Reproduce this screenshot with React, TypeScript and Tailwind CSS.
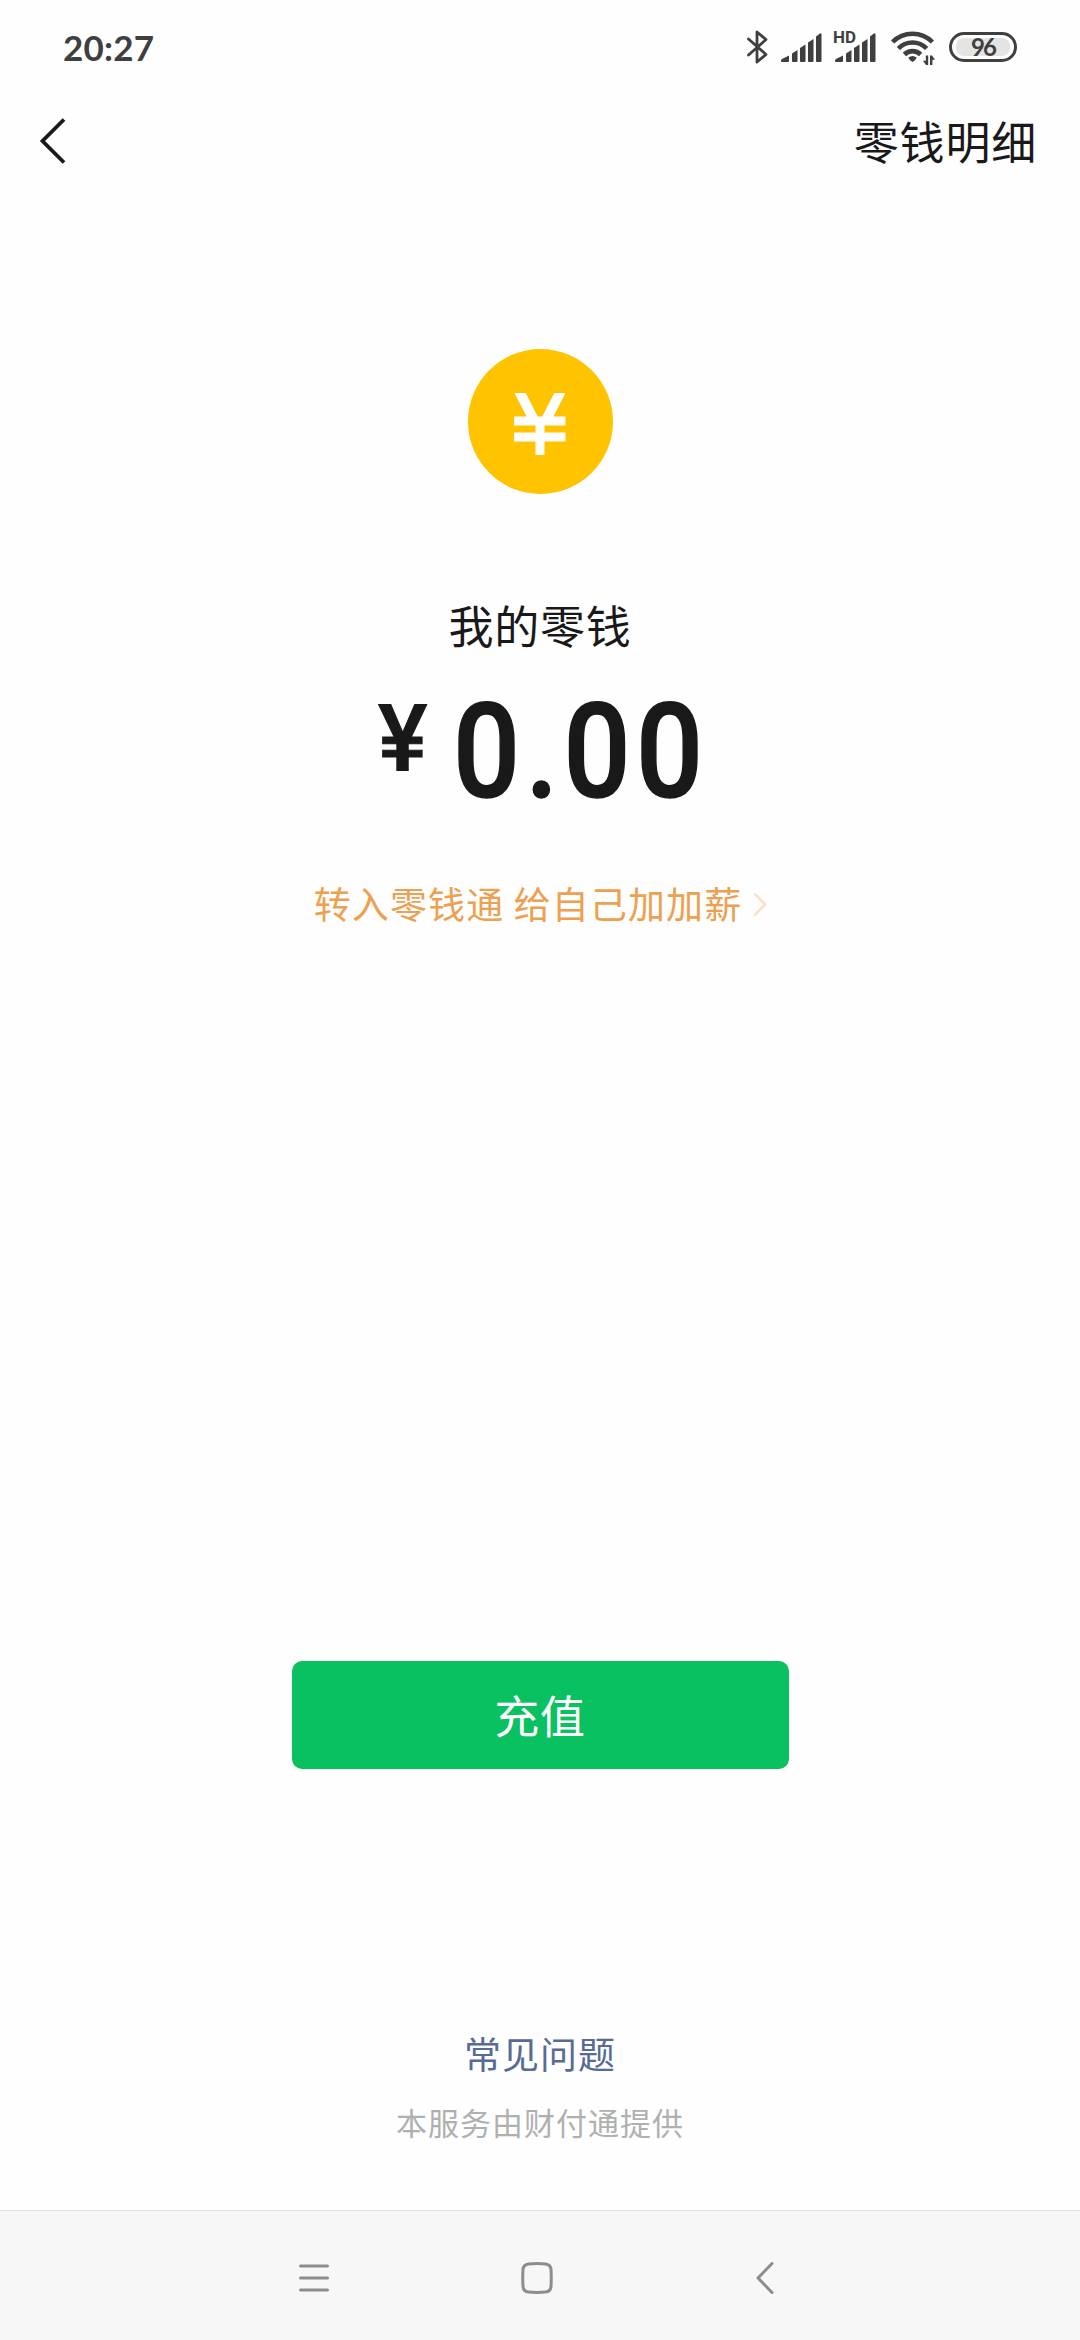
import type { ReactNode } from "react";

const SIGNAL_BARS = [
  "M0 27.5 Q0 26.5 1 26 L8 22.5 V28 Q8 29 7 29 H1 Q0 29 0 28 Z",
  "M11 20.5 L16.500 17 V28 Q16.500 29 15.500 29 H12 Q11 29 11 28 Z",
  "M19 15 L24.500 11.5 V28 Q24.500 29 23.500 29 H20 Q19 29 19 28 Z",
  "M27 9.5 L32.500 6 V28 Q32.500 29 31.500 29 H28 Q27 29 27 28 Z",
  "M35 3.5 L39 .5 Q40.500 0 40.500 1 V28 Q40.500 29 39.500 29 H36 Q35 29 35 28 Z",
];

function Signal({ hd = false }: { hd?: boolean }) {
  return (
    <svg width="40" height="34" viewBox="0 -3 40 34" className="overflow-visible" fill="#3f3f3f">
      {SIGNAL_BARS.map((d) => (
        <path key={d} d={d} />
      ))}
      {hd && (
        <text
          x="-2"
          y="10"
          fontSize="16"
          textLength="23"
          lengthAdjust="spacingAndGlyphs"
          stroke="#fefefe"
          strokeWidth="2"
          paintOrder="stroke"
          className="font-['Roboto',sans-serif] font-bold"
        >
          HD
        </text>
      )}
    </svg>
  );
}

function StatusBar() {
  return (
    <div className="flex h-[94px] items-center px-[63px] text-[#3f3f3f] font-['Lato',sans-serif]">
      <span className="text-[35px] leading-[94px] font-bold tracking-[0.2px]">20:27</span>
      <div className="ml-auto flex items-center">
        {/* bluetooth */}
        <svg width="22" height="34" viewBox="0 0 22 34" fill="none" stroke="#3f3f3f" strokeWidth="2.8" strokeLinejoin="round" strokeLinecap="round">
          <path d="M2.500 9 L20 24.5 L11 32 V2 L20 9.5 L2.500 25" />
        </svg>
        <div className="ml-[13px] flex">
          <Signal />
        </div>
        <div className="ml-[14px] flex">
          <Signal hd />
        </div>
        {/* wifi */}
        <svg width="43" height="34" viewBox="0 0 43 34" className="ml-[16px] overflow-visible" fill="none" stroke="#3f3f3f">
          <path d="M1.600 12 A28 28 0 0 1 41.400 12" strokeWidth="4.600" />
          <path d="M7.400 18.500 A19.500 19.500 0 0 1 35.600 18.500" strokeWidth="4.600" />
          <path d="M13.400 24.500 A11.500 11.500 0 0 1 29.600 24.500" strokeWidth="4.600" />
          <path d="M17.300 27.500 Q21.500 24.500 25.700 27.500 Q25 30 21.500 32 Q18 30 17.300 27.500 Z" fill="#3f3f3f" stroke="none" />
          <path d="M37.200 25.500 V35 H35 L32 30.800 H34.800 V25.500 Z M39 35 V25.500 H41 L44 29.800 H41.400 V35 Z" fill="#3f3f3f" stroke="none" />
        </svg>
        {/* battery */}
        <div className="ml-[15px] flex h-[30px] w-[68px] items-center justify-center rounded-full border-[3.5px] border-[#3f3f3f]">
          <div className="flex h-[18px] w-[54px] items-center justify-center rounded-[8px] bg-[#e4e4e4]">
            <span className="text-[24px] leading-[18px] font-bold tracking-[-1.8px]">96</span>
          </div>
        </div>
      </div>
    </div>
  );
}

function Header() {
  return (
    <div className="flex h-[93px] items-center pl-[39px] pr-[43px]">
      <svg width="27" height="46" viewBox="0 0 27 46" fill="none" stroke="#191919" strokeWidth="3.800">
        <path d="M25 1.500 L3.500 23 L25 44.500" />
      </svg>
      <button className="ml-auto text-[45px] leading-[93px] tracking-[0.8px] text-[#191919]">零钱明细</button>
    </div>
  );
}

function Coin() {
  return (
    <div className="mt-[162px] flex h-[145px] w-[145px] items-center justify-center rounded-full bg-[#ffc300] pt-[4px]">
      <svg width="52" height="62" viewBox="0 0 52 62" fill="none" stroke="#fff" strokeWidth="9">
        <path d="M5 -2 L20.500 28 M47 -2 L31.500 28" strokeWidth="10" />
        <path d="M0 28 H51.500 M0 44 H51.500 M26 25 V62" />
      </svg>
    </div>
  );
}

function NavButton({ children }: { children: ReactNode }) {
  return <button className="flex h-full w-[225px] items-center justify-center">{children}</button>;
}

function NavBar() {
  return (
    <div className="flex h-[130px] justify-center border-t border-[#dcdcdc] bg-[#f7f7f7] pt-[5px]">
      <NavButton>
        <svg width="30" height="32" viewBox="0 0 30 32" stroke="#8d8d8d" strokeWidth="3" strokeLinecap="round" className="mr-[2px]">
          <path d="M1.500 4 H28.500 M1.500 16 H28.500 M1.500 28 H28.500" />
        </svg>
      </NavButton>
      <NavButton>
        <svg width="32" height="32" viewBox="0 0 32 32" fill="none" stroke="#8d8d8d" strokeWidth="3" className="mr-[6px]">
          <path d="M7.500 2 Q16 1 24.500 2 Q29.500 2.500 30 7.500 Q30.500 16 30 24.500 Q29.500 29.500 24.500 30 Q16 31 7.500 30 Q2.500 29.500 2 24.500 Q1.500 16 2 7.500 Q2.500 2.500 7.500 2 Z" />
        </svg>
      </NavButton>
      <NavButton>
        <svg width="18" height="32" viewBox="0 0 18 32" fill="none" stroke="#8d8d8d" strokeWidth="3" strokeLinecap="round" strokeLinejoin="round">
          <path d="M16 1.500 L2 16 L16 30.500" />
        </svg>
      </NavButton>
    </div>
  );
}

export default function App() {
  return (
    <div className="flex h-[2340px] w-[1080px] flex-col overflow-hidden bg-[#fefefe] font-['Noto_Sans_CJK_SC',sans-serif] text-[#191919]">
      <StatusBar />
      <Header />
      <main className="flex flex-1 flex-col items-center">
        <Coin />
        <h1 className="mt-[98px] text-[45px] leading-[66px] tracking-[0.8px]">我的零钱</h1>

        {/* balance */}
        <div className="mt-[22px] flex h-[144px] w-[324px] items-start font-['Roboto',sans-serif] font-medium">
          <span className="mt-[6px] w-[75px] shrink-0 text-[93px] leading-[108px] [-webkit-text-stroke:1px_#191919]">¥</span>
          <span className="origin-left scale-x-90 text-[131px] leading-[144px] tracking-[6px] [-webkit-text-stroke:1.5px_#191919]">
            0.00
          </span>
        </div>

        <button className="mt-[49px] flex items-center pl-px text-[#eda150]">
          <span className="text-[37px] leading-[60px] tracking-[1.1px]">转入零钱通 给自己加加薪</span>
          <svg width="14" height="25" viewBox="0 0 14 25" className="mt-[3px] ml-[11px]" fill="none" stroke="#fadfc6" strokeWidth="2.500">
            <path d="M1.500 1.500 L12 12.500 L1.500 23.500" />
          </svg>
        </button>

        <button className="mt-auto h-[108px] w-[497px] rounded-[10px] bg-[#09c160] text-[45px] leading-[106px] tracking-[0.8px] text-white">
          充值
        </button>
        <a className="mt-[254px] text-[37px] leading-[60px] tracking-[1px] text-[#576b95]">常见问题</a>
        <p className="mt-[14px] mb-[63px] text-[31px] leading-[50px] tracking-[1px] text-[#b0b0b0]">本服务由财付通提供</p>
      </main>
      <NavBar />
    </div>
  );
}
